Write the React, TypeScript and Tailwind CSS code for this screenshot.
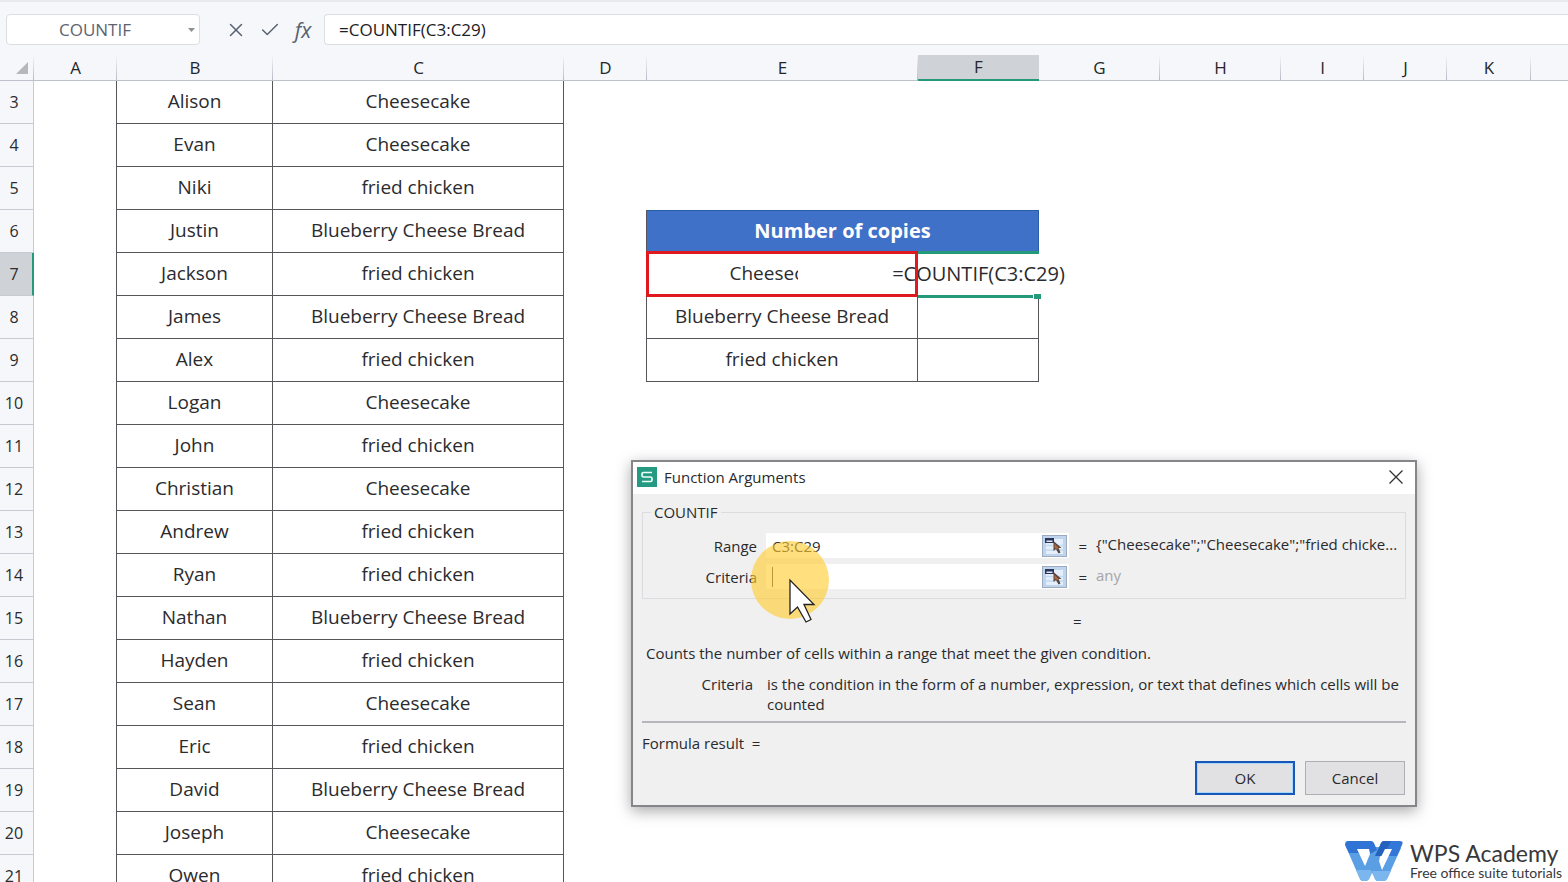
import { Check, X } from 'lucide-react';

const columns = ['A', 'B', 'C', 'D', 'E', 'F', 'G', 'H', 'I', 'J', 'K'];

const orders = [
  { name: 'Alison', item: 'Cheesecake' },
  { name: 'Evan', item: 'Cheesecake' },
  { name: 'Niki', item: 'fried chicken' },
  { name: 'Justin', item: 'Blueberry Cheese Bread' },
  { name: 'Jackson', item: 'fried chicken' },
  { name: 'James', item: 'Blueberry Cheese Bread' },
  { name: 'Alex', item: 'fried chicken' },
  { name: 'Logan', item: 'Cheesecake' },
  { name: 'John', item: 'fried chicken' },
  { name: 'Christian', item: 'Cheesecake' },
  { name: 'Andrew', item: 'fried chicken' },
  { name: 'Ryan', item: 'fried chicken' },
  { name: 'Nathan', item: 'Blueberry Cheese Bread' },
  { name: 'Hayden', item: 'fried chicken' },
  { name: 'Sean', item: 'Cheesecake' },
  { name: 'Eric', item: 'fried chicken' },
  { name: 'David', item: 'Blueberry Cheese Bread' },
  { name: 'Joseph', item: 'Cheesecake' },
  { name: 'Owen', item: 'fried chicken' },
];

const cell = 'p-0 pb-0.5 border-r border-b border-[#55555a]';

function FormulaBar() {
  return (
    <div className="flex items-center h-[55px] pl-1.5 pt-0.5 border-t-2 border-[#e9eaec]">
      <div className="flex items-center shrink-0 w-[194px] h-[31px] bg-white border border-[#dcdee1] rounded-sm">
        <input
          aria-label="Name box"
          defaultValue="COUNTIF"
          className="w-[176px] text-center text-[17px] text-[#5c6470] bg-transparent outline-none"
        />
        <button aria-label="Name list" className="flex items-center justify-center w-4 h-full">
          <svg width="7" height="4" viewBox="0 0 7 4"><path d="M0 0h7L3.5 4z" fill="#8a8f98" /></svg>
        </button>
      </div>
      <div className="flex items-center shrink-0 w-[124px] pl-[25px] gap-3 text-[#596270]">
        <button aria-label="Cancel entry"><X size={22} strokeWidth={1.6} /></button>
        <button aria-label="Accept entry"><Check size={22} strokeWidth={1.6} /></button>
        <button aria-label="Insert function" className="w-5 text-[21px] leading-6 italic">fx</button>
      </div>
      <input
        aria-label="Formula"
        defaultValue="=COUNTIF(C3:C29)"
        className="flex-1 min-w-0 h-[31px] pl-3.5 text-[17px] text-[#1d2025] bg-white border border-r-0 border-[#dcdee1] rounded-l-sm outline-none"
      />
    </div>
  );
}

function SummaryCells({ row }: { row: number }) {
  if (row === 6) {
    return (
      <th colSpan={2} scope="colgroup" className="p-0 pb-0.5 bg-[#3f71c8] border-t border-r border-[#285ea8] text-[20px] text-white font-bold">
        Number of copies
      </th>
    );
  }
  if (row === 7) {
    return (
      <>
        <td className={`${cell} relative`}>
          Cheesecake
          <div className="absolute z-20 -left-px -right-px -top-0.5 -bottom-0.5 border-[3px] border-[#e0191f]" />
        </td>
        <td className="relative p-0">
          {/* the in-cell editor spreads over its neighbours */}
          <div className="absolute z-10 -inset-x-[120px] top-0 bottom-px pb-px flex items-center justify-center bg-white text-[20px]">
            =COUNTIF(C3:C29)
          </div>
          <div className="absolute z-10 inset-x-0 -top-0.5 -bottom-0.5 border-y-[3px] border-[#249a7b]" />
          <div className="absolute z-10 -right-0.5 -bottom-[3px] w-2 h-[5px] bg-[#249a7b] border-l border-white" />
        </td>
      </>
    );
  }
  if (row === 8 || row === 9) {
    return (
      <>
        <td className={cell}>{row === 8 ? 'Blueberry Cheese Bread' : 'fried chicken'}</td>
        <td className={cell} />
      </>
    );
  }
  return (
    <>
      <td />
      <td />
    </>
  );
}

function Sheet() {
  return (
    <table className="w-full table-fixed border-separate border-spacing-0 text-center text-[19px] leading-6 text-[#2b2b2e]">
      <colgroup>
        <col className="w-[34px]" />
        <col className="w-[83px]" />
        <col className="w-[156px]" />
        <col className="w-[291px]" />
        <col className="w-[83px]" />
        <col className="w-[271px]" />
        <col className="w-[121px]" />
        <col className="w-[121px]" />
        <col className="w-[121px]" />
        <col className="w-[83px]" />
        <col className="w-[83px]" />
        <col className="w-[84px]" />
        <col />
      </colgroup>
      <thead>
        <tr className="h-[26px] text-[17px] leading-6 text-[#24262a]">
          <td className="p-0 border-b border-[#bcc1cb] bg-[linear-gradient(to_top,#b4bac6,transparent)] bg-[length:1px_100%] bg-right bg-no-repeat">
            <svg className="ml-4" width="12" height="12" viewBox="0 0 12 12"><path d="M12 0v12H0z" fill="#b5b8bc" /></svg>
          </td>
          {columns.map((c) => (
            <th
              key={c}
              scope="col"
              className={
                c === 'F'
                  ? 'p-0 font-medium bg-[#cfd2d6] border-b-2 border-[#249a7b]'
                  : 'p-0 font-medium border-b border-[#bcc1cb] bg-[linear-gradient(to_top,#b4bac6,transparent)] bg-[length:1px_100%] bg-right bg-no-repeat'
              }
            >
              {c}
            </th>
          ))}
          <td className="border-b border-[#bcc1cb]" />
        </tr>
      </thead>
      <tbody className="bg-white">
        {orders.map((o, i) => {
          const row = i + 3;
          // column D carries the left edge of the summary block
          const edge = row >= 6 && row <= 9 ? 'border-r border-[#55555a]' : '';
          return (
            <tr key={row} className="h-[43px]">
              <th
                scope="row"
                className={
                  row === 7
                    ? 'p-0 pr-1 text-[16px] font-medium bg-[#cfd2d6] border-r-2 border-b border-[#249a7b] border-b-[#c5cad3]'
                    : 'p-0 pr-[5px] text-[16px] font-medium bg-[#f5f7fa] border-r border-b border-[#c5cad3]'
                }
              >
                {row}
              </th>
              <td className="p-0 border-r border-[#55555a]" />
              <td className={cell}>{o.name}</td>
              <td className={cell}>{o.item}</td>
              <td className={edge} />
              <SummaryCells row={row} />
              <td colSpan={6} />
            </tr>
          );
        })}
      </tbody>
    </table>
  );
}

function RangeButton({ label }: { label: string }) {
  return (
    <button aria-label={label} className="shrink-0 w-[25px] h-[22px] mr-0.5 bg-[#bfd5ee] border border-[#9cabc0]">
      <svg width="23" height="20" viewBox="0 0 23 20">
        <path d="M3 3h17v15H3z" fill="#e4effb" />
        <path d="M3 9.500h17M3 14h17" stroke="#c3d9f0" strokeWidth="1.500" />
        <path d="M2 2h9v5H2z" fill="#2a3358" />
        <path d="M3.500 4.500h6v1.500h-6z" fill="#dfe8f5" />
        <path d="M10.500 5v10l2.500-2 2.500 4.500 2-1-2-4.500h3z" fill="#55443f" />
        <path d="M11.500 7.500l4.500 5-1.500.5-3-1z" fill="#b8683a" />
      </svg>
    </button>
  );
}

function FunctionDialog() {
  return (
    <div
      role="dialog"
      aria-label="Function Arguments"
      className="absolute z-30 left-[631px] top-[460px] w-[786px] bg-[#f0f0f0] border-2 border-[#85868a] shadow-[0_4px_14px_rgba(0,0,0,0.35)] text-[15px] leading-5 text-[#2a2a2d]"
    >
      <div className="flex items-center h-8 pb-0.5 pl-1 pr-3 gap-[7px] bg-white">
        <svg width="20" height="20" viewBox="0 0 20 20">
          <path d="M0 0h20v20H0z" fill="#249a82" />
          <path d="M15 5.500H6.500Q5 5.500 5 7v1.500Q5 10 6.500 10h7Q15 10 15 11.500V13q0 1.500-1.500 1.500H5" fill="none" stroke="#e9fff8" strokeWidth="1.700" />
        </svg>
        <h2 className="flex-1">Function Arguments</h2>
        <button aria-label="Close">
          <svg width="14" height="14" viewBox="0 0 14 14"><path d="M.5.5l13 13M13.500.5l-13 13" stroke="#333" strokeWidth="1.300" /></svg>
        </button>
      </div>

      <div className="px-[9px] pt-2 pb-[9px]">
        <fieldset className="pt-[11px] pb-[9px] border border-[#dadce0]">
          <legend className="ml-2 px-[3px]">COUNTIF</legend>
          <div className="grid grid-cols-[114px_303px_27px_1fr] items-center gap-y-1.5">
            <label htmlFor="range" className="text-right">Range</label>
            <div className="flex items-center h-[25px] ml-[9px] bg-white w-[303px]">
              <input id="range" defaultValue="C3:C29" className="flex-1 min-w-0 pl-1.5 bg-transparent outline-none" />
              <RangeButton label="Select range" />
            </div>
            <span className="text-right">=</span>
            <output className="pl-[9px] pb-1 whitespace-nowrap">{'{"Cheesecake";"Cheesecake";"fried chicke...'}</output>

            <label htmlFor="criteria" className="text-right">Criteria</label>
            <div className="flex items-center h-[25px] ml-[9px] pl-1.5 bg-white w-[303px]">
              <span className="w-px h-5 bg-[#444]" />
              <input id="criteria" className="flex-1 min-w-0 bg-transparent outline-none" />
              <RangeButton label="Select criteria" />
            </div>
            <span className="text-right">=</span>
            <output className="pl-[9px] pb-1 text-[#a5a6a9]">any</output>
          </div>
        </fieldset>

        <p className="mt-3 pl-[431px]">=</p>
        <p className="mt-3 pl-1">Counts the number of cells within a range that meet the given condition.</p>
        <dl className="flex gap-3.5 mt-[11px]">
          <dt className="w-[111px] shrink-0 text-right">Criteria</dt>
          <dd className="flex-1">
            is the condition in the form of a number, expression, or text that defines which cells will be counted
          </dd>
        </dl>
        <hr className="mt-[7px] border-t-2 border-[#b4b6b9]" />
        <p className="mt-2.5">Formula result&nbsp; =</p>
        <div className="flex justify-end gap-2.5 mt-2 pr-px pb-px">
          <button className="w-[100px] h-[34px] bg-[#e1e1e3] border-2 border-[#1857b5] ring-1 ring-inset ring-[#a9d7fb]">OK</button>
          <button className="w-[100px] h-[34px] bg-[#e1e1e3] border border-[#adafb2]">Cancel</button>
        </div>
      </div>

      <svg className="absolute left-[118px] top-[79px] pointer-events-none" width="80" height="84" viewBox="0 0 80 84">
        <circle cx="39" cy="39" r="39" fill="#ffcb2e" fillOpacity="0.620" />
        <path d="M39 39v34l7.500-7 8.500 15 5-2.500L53 63.500h10z" fill="#fff" stroke="#222" strokeWidth="1.300" />
      </svg>
    </div>
  );
}

function Brand() {
  return (
    <div className="absolute z-30 right-1.5 bottom-0 flex gap-[7px] bg-white pl-1">
      <svg width="58" height="41" viewBox="0 0 58 41">
        <path d="M1 6H12L20 24 29 6H40L24 38Q23 40 20 40H18Q16 40 15 38Z" fill="#5a9fe3" />
        <path d="M15 38L11 29H28L24 38Q23 40 20 40H18Q16 40 15 38Z" fill="#7cb6ee" />
        <path d="M23 7H31L37 26 46 7H56L42 38Q41 40 38 40H33Q31 40 30 38L21 18Z" fill="#5a9fe3" />
        <path d="M27 30H46L42 38Q41 40 38 40H33Q31 40 30 38Z" fill="#7cb6ee" />
        <path d="M3 0H26Q28 0 29 2L32 9 25 13 24 8H12L14 12H4L0 4Q0 0 3 0Z" fill="#2f73d4" />
        <path d="M12 8H24L25 13 20 25Z" fill="#fff" />
        <path d="M39 0H55Q59 0 57 4L52 15H43L46 8H34L36 2Q37 0 39 0Z" fill="#3378d8" />
        <path d="M39 0H46L42 8 37 15H30L36 2Q37 0 39 0Z" fill="#2362bd" />
        <path d="M40 8H47L37 29 34 20Z" fill="#fff" />
      </svg>
      <div className="font-['Lato',sans-serif] text-[#38383b]">
        <p className="text-[23px] leading-6">WPS Academy</p>
        <p className="text-[14px] leading-4">Free office suite tutorials</p>
      </div>
    </div>
  );
}

export default function App() {
  return (
    <main className="relative h-screen overflow-hidden bg-[#f5f7fa] font-['Open_Sans',sans-serif]">
      <FormulaBar />
      <Sheet />
      <FunctionDialog />
      <Brand />
    </main>
  );
}
